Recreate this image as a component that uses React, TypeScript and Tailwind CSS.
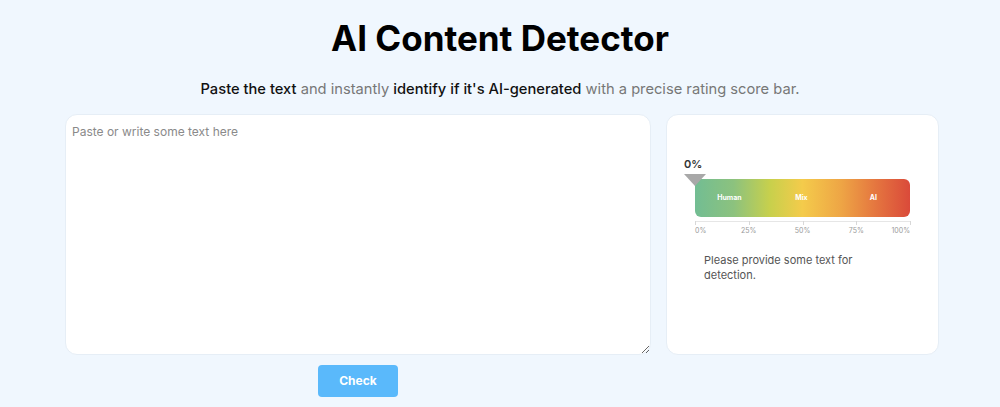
import { useState } from "react";

const font = { fontFamily: "Inter, 'Open Sans', sans-serif" };

const zones = [
  { label: "Human", at: "16%" },
  { label: "Mix", at: "49.5%" },
  { label: "AI", at: "83%" },
];

function ScoreGauge({ score }: { score: number }) {
  return (
    <div className="relative w-[215px]">
      <div className="absolute left-[-11px] top-[-23px] text-[11px] font-semibold leading-4 text-[#333]">{score}%</div>
      <div
        className="absolute top-[-5px] z-10 h-0 w-0 border-l-[11px] border-r-[11px] border-t-[12px] border-l-transparent border-r-transparent border-t-[#a8a8a8]"
        style={{ left: `calc(${score}% - 11px)` }}
      />
      <div className="relative h-[38px] rounded-md bg-[linear-gradient(90deg,#72bd93_0%,#8cc27e_18%,#c8d04c_35%,#f4cb4b_50%,#eea545_68%,#e4733f_85%,#da4a3a_100%)] text-[7px] font-bold text-white">
        {zones.map((z) => (
          <span
            key={z.label}
            className="absolute top-1/2 -translate-x-1/2 -translate-y-1/2"
            style={{ left: z.at }}
          >
            {z.label}
          </span>
        ))}
      </div>
      <div className="relative mt-[4px] h-px bg-[#e6e6e6]">
        {[0, 25, 50, 75, 100].map((t) => (
          <div key={t} className="absolute top-0 h-[4px] w-px bg-[#d8d8d8]" style={{ left: `${t}%` }}>
            <span
              className="absolute top-[5px] text-[7px] leading-[9px] text-[#9a9a9a]"
              style={{ transform: t === 0 ? "none" : t === 100 ? "translateX(-100%)" : "translateX(-50%)" }}
            >
              {t}%
            </span>
          </div>
        ))}
      </div>
    </div>
  );
}

export default function App() {
  const [text, setText] = useState("");

  return (
    <div className="min-h-[407px] w-full bg-[#f0f7fe] pt-[18px]" style={font}>
      <h1 className="text-center text-[35px] font-bold leading-[40px] text-black">AI Content Detector</h1>
      <p className="mt-[21px] text-center text-[14.7px] leading-5 text-[#777]">
        <span className="font-medium text-[#111]">Paste the text</span> and instantly{" "}
        <span className="font-medium text-[#111]">identify if it's AI-generated</span> with a precise rating score bar.
      </p>

      <div className="ml-[65px] mt-[15px] flex gap-[15px]">
        <div className="flex w-[586px] flex-col items-center">
          <textarea
            value={text}
            onChange={(e) => setText(e.target.value)}
            placeholder="Paste or write some text here"
            className="h-[241px] w-full rounded-xl border border-[#e6eef6] bg-white px-[6px] py-[8px] text-[12px] text-[#333] placeholder:text-[#8a8a8a] outline-none"
          />
          <button
            type="button"
            className="mt-[10px] h-[32px] w-[80px] rounded bg-[#5ab9fb] text-[12px] font-bold text-white"
          >
            Check
          </button>
        </div>

        <div className="flex h-[241px] w-[273px] flex-col items-center rounded-xl border border-[#e6eef6] bg-white pt-[64px]">
          <ScoreGauge score={0} />
          <p className="mt-[31px] w-[215px] pl-[9px] pr-[50px] text-[11px] leading-[15px] text-[#555]">
            Please provide some text for detection.
          </p>
        </div>
      </div>
    </div>
  );
}
